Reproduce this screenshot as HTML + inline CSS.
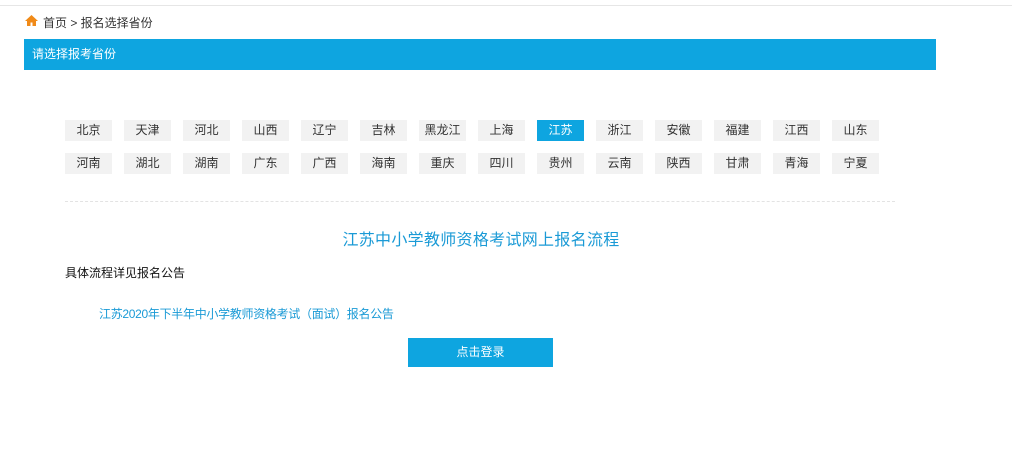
<!DOCTYPE html>
<html><head><meta charset="utf-8"><style>
body{margin:0;width:1012px;height:456px;background:#fff;font-family:"Liberation Sans","Noto Sans CJK SC",sans-serif;position:relative;overflow:hidden}
.a{position:absolute}
.p{position:absolute;width:47px;height:21px;background:#f2f2f2;font-size:12px;color:#333;text-align:center;line-height:21px}
.p.on{background:#0ea5e0;color:#fff}
</style></head><body>
<div class="a" style="left:0;top:5px;width:1012px;height:1px;background:#e6e6e6"></div>
<svg class="a" style="left:25px;top:15px" width="13" height="11" viewBox="0 0 13 11"><path d="M6.5 0L0 6h2v5h3.5V7.5h2V11H11V6h2z" fill="#f08a18"/></svg>
<div class="a" style="left:43px;top:14px;font-size:12px;color:#333">首页 &gt; 报名选择省份</div>
<div class="a" style="left:24px;top:39px;width:912px;height:31px;background:#0ea5e0;color:#fff;font-size:12px;line-height:31px;text-indent:8px">请选择报考省份</div>
<div id="ps"></div>
<div class="a" style="left:65px;top:201px;width:830px;border-top:1px dashed #e3e3e3"></div>
<div class="a" style="left:0;top:226px;width:962px;text-align:center;font-size:16px;color:#1a9ad6;letter-spacing:0.3px">江苏中小学教师资格考试网上报名流程</div>
<div class="a" style="left:65px;top:264px;font-size:12px;color:#111">具体流程详见报名公告</div>
<div class="a" style="left:99px;top:305px;font-size:12px;color:#1a9ad6;letter-spacing:-0.3px">江苏2020年下半年中小学教师资格考试（面试）报名公告</div>
<div class="a" style="left:408px;top:338px;width:145px;height:29px;background:#0ea5e0;color:#fff;font-size:12px;text-align:center;line-height:29px">点击登录</div>
<script>
var r1="北京 天津 河北 山西 辽宁 吉林 黑龙江 上海 江苏 浙江 安徽 福建 江西 山东".split(" "),r2="河南 湖北 湖南 广东 广西 海南 重庆 四川 贵州 云南 陕西 甘肃 青海 宁夏".split(" "),h="";
[r1,r2].forEach(function(r,j){r.forEach(function(n,i){h+='<div class="p'+(n=="江苏"?" on":"")+'" style="left:'+(65+i*59)+'px;top:'+(120+j*33)+'px">'+n+'</div>'})});
document.getElementById("ps").innerHTML=h;
</script>
</body></html>
